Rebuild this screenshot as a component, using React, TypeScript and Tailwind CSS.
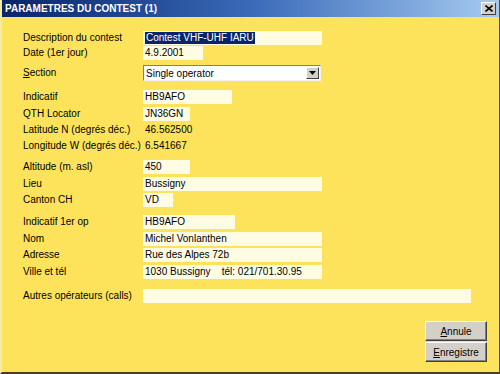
const font = { fontFamily: '"Liberation Sans", Arial, sans-serif' };

type Row = { label: React.ReactNode; value?: string; width?: number; plain?: boolean; mt: number; selected?: boolean };

const rows: Row[] = [
  { label: 'Description du contest', value: 'Contest VHF-UHF IARU', width: 179, mt: 14, selected: true },
  { label: 'Date (1er jour)', value: '4.9.2001', width: 60, mt: 1 },
];

const rowsB: Row[] = [
  { label: 'Indicatif', value: 'HB9AFO', width: 89, mt: 9 },
  { label: 'QTH Locator', value: 'JN36GN', width: 47, mt: 3 },
  { label: 'Latitude N (degrés déc.)', value: '46.562500', plain: true, mt: 2 },
  { label: 'Longitude W (degrés déc.)', value: '6.541667', plain: true, mt: 2 },
  { label: 'Altitude (m. asl)', value: '450', width: 47, mt: 7 },
  { label: 'Lieu', value: 'Bussigny', width: 179, mt: 3 },
  { label: 'Canton CH', value: 'VD', width: 30, mt: 2 },
  { label: 'Indicatif 1er op', value: 'HB9AFO', width: 92, mt: 8 },
  { label: 'Nom', value: 'Michel Vonlanthen', width: 179, mt: 3 },
  { label: 'Adresse', value: 'Rue des Alpes 72b', width: 179, mt: 2 },
  { label: 'Ville et tél', value: '1030 Bussigny    tél: 021/701.30.95', width: 179, mt: 3 },
  { label: 'Autres opérateurs (calls)', value: '', width: 328, mt: 10 },
];

function FieldRow({ row }: { row: Row }) {
  return (
    <div className="flex items-center h-[14px]" style={{ marginTop: row.mt }}>
      <div className="w-[120px] text-[10px] text-black leading-none whitespace-nowrap">{row.label}</div>
      {row.plain ? (
        <div className="text-[10px] text-black leading-none pl-[2px]">{row.value}</div>
      ) : (
        <div className="h-[14px] bg-[#fffce4] flex items-center pl-[2px] text-[10px] text-black whitespace-pre leading-none" style={{ width: row.width }}>
          {row.selected ? <span className="bg-[#0a246a] text-white px-[1px] py-[1px]">{row.value}</span> : row.value}
        </div>
      )}
    </div>
  );
}

function Btn({ first, rest }: { first: string; rest: string }) {
  return (
    <div className="w-[62px] h-[20px] bg-[#d4d0c8] border-t border-l border-white border-r border-b border-r-[#404040] border-b-[#404040] shadow-[inset_-1px_-1px_0_#808080] flex items-center justify-center text-[10px] text-black">
      <span className="underline">{first}</span>{rest}
    </div>
  );
}

export default function App() {
  return (
    <div className="w-[500px] h-[374px] bg-[#fde35c] flex flex-col border-l-2 border-l-[#f6eaa8] border-r border-r-[#5a5020] border-b-2 border-b-[#4a4020]" style={font}>
      <div className="h-[17px] shrink-0 flex items-center justify-between pl-[3px] pr-[3px] bg-gradient-to-r from-[#0a246a] via-[#3a6ab8] to-[#a6caf0]">
        <span className="text-white font-bold text-[10px]">PARAMETRES DU CONTEST (1)</span>
        <div className="w-[15px] h-[13px] bg-[#d4d0c8] border-t border-l border-white border-r border-b border-r-[#404040] border-b-[#404040] flex items-center justify-center">
          <svg width="8" height="7" viewBox="0 0 8 7"><path d="M0.5 0.5 L7.5 6.5 M7.5 0.5 L0.5 6.5" stroke="#000" strokeWidth="1.6" /></svg>
        </div>
      </div>
      <div className="flex-1 flex flex-col pl-[21px]">
        {rows.map((r, i) => <FieldRow key={i} row={r} />)}
        <div className="flex items-center h-[16px] mt-[5px]">
          <div className="w-[120px] text-[10px] text-black leading-none"><span className="underline">S</span>ection</div>
          <div className="w-[178px] h-[16px] bg-white border-t border-l border-[#808080] border-r border-b border-r-[#f0f0f0] border-b-[#f0f0f0] flex items-center justify-between">
            <span className="text-[10px] text-black pl-[2px]">Single operator</span>
            <div className="w-[13px] h-[12px] mr-[1px] bg-[#d4d0c8] border-t border-l border-white border-r border-b border-r-[#404040] border-b-[#404040] flex items-center justify-center">
              <svg width="7" height="4" viewBox="0 0 7 4"><path d="M0 0 H7 L3.5 4 Z" fill="#000" /></svg>
            </div>
          </div>
        </div>
        {rowsB.map((r, i) => <FieldRow key={i} row={r} />)}
        <div className="flex flex-col items-end gap-[1px] mt-[18px] mr-[12px]">
          <Btn first="A" rest="nnule" />
          <Btn first="E" rest="nregistre" />
        </div>
      </div>
    </div>
  );
}
